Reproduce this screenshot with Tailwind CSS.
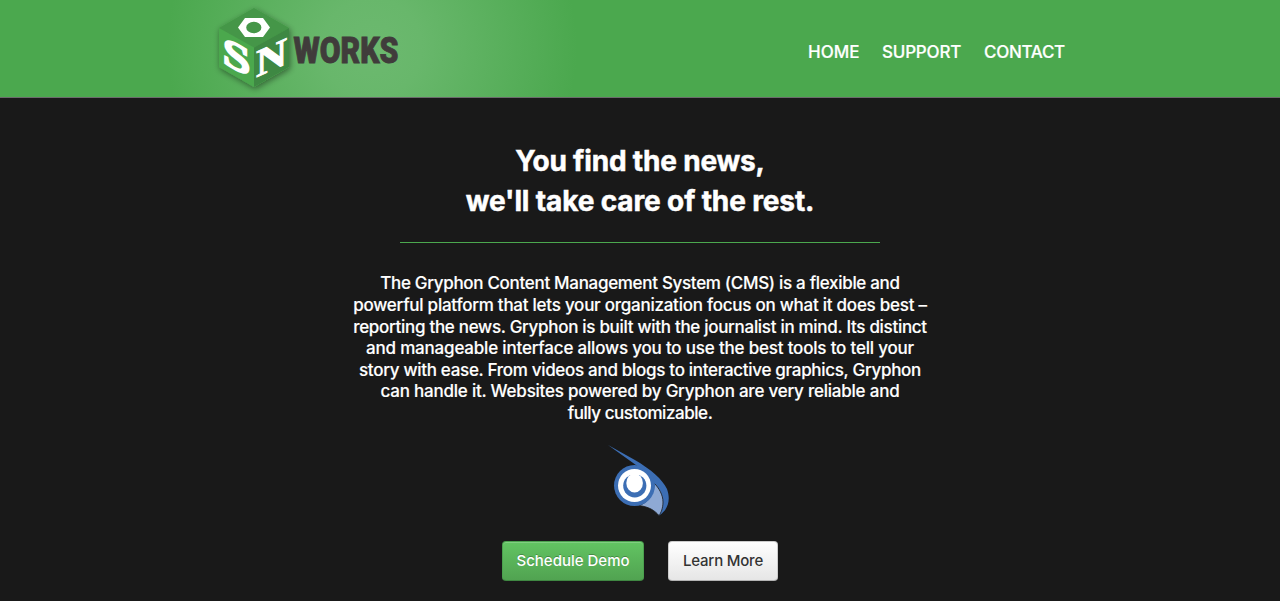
<!DOCTYPE html>
<html lang="en">
<head>
<meta charset="utf-8">
<title>SNworks</title>
<script src="https://cdn.jsdelivr.net/npm/@tailwindcss/browser@4"></script>
</head>
<body class="h-[601px] overflow-hidden bg-[#191919] font-['Inter',sans-serif] text-white">
<header class="h-[98px] border-b border-[#6b6b6b] bg-[#4ba84e] bg-[radial-gradient(circle_at_372px_48px,#6cb96f_0px,#68b76b_50px,#4ba84e_205px)]">
  <div class="mx-auto flex h-full w-[850px] items-start justify-between">
    <svg class="block h-[97px] w-[190px] overflow-visible" viewBox="215 0 190 97" role="img" aria-label="SNworks">
      <defs><filter id="sh" x="-20%" y="-20%" width="140%" height="140%"><feDropShadow dx="1" dy="2" stdDeviation="3" flood-color="#000" flood-opacity=".45"/></filter></defs>
      <g filter="url(#sh)">
        <path d="M254 8L289 28V67L254 87L219 67V28Z" fill="#4ba84e"/>
      </g>
      <path d="M254 8L289 28L254 47.5L219 28Z" fill="#459648"/>
      <path d="M289 28V67L254 87V47.5Z" fill="#3e8843"/>
      <path fill-rule="evenodd" fill="#fff" d="M238 27.5L245 18H263L270 27.5L263 37H245ZM246.2 27.5a7.6 5.8 0 1 0 15.2 0a7.6 5.8 0 1 0 -15.2 0Z"/>
      <text transform="matrix(1 .5 0 1 222.500 63)" font-family="Liberation Serif" font-weight="700" font-size="40" textLength="28" lengthAdjust="spacingAndGlyphs" fill="#fff" stroke="#fff" stroke-width="1.6">S</text>
      <text transform="matrix(1 -.45 0 1 256 77.500)" font-family="Liberation Serif" font-weight="700" font-size="39" textLength="31" lengthAdjust="spacingAndGlyphs" fill="#fff" stroke="#fff" stroke-width=".9">N</text>
      <text x="293.500" y="62.500" font-family="Roboto" font-weight="900" font-size="36.500" textLength="105" lengthAdjust="spacingAndGlyphs" fill="#403c3b" stroke="#403c3b" stroke-width=".9">WORKS</text>
    </svg>
    <nav class="flex gap-[22px] pt-[38px] text-[17px] leading-7 font-medium [-webkit-text-stroke:0.2px_white]">
      <a class="-ml-px w-[52px] tracking-[0.05px]">HOME</a>
      <a class="w-[80px] tracking-[-0.2px]">SUPPORT</a>
      <a class="w-[81px] tracking-[-0.3px]">CONTACT</a>
    </nav>
  </div>
</header>
<main class="flex flex-col items-center pt-[43px]">
  <h1 class="text-center text-[28px] leading-10 font-bold whitespace-nowrap [-webkit-text-stroke:0.5px_white]"><span class="block tracking-[-0.19px]">You find the news,</span><span class="block tracking-[-0.13px]">we'll take care of the rest.</span></h1>
  <hr class="mt-[21px] w-[480px] border-t border-[#4ba84e]">
  <p class="mt-[30.4px] text-center text-[17px] leading-[21.6px] font-medium whitespace-nowrap [-webkit-text-stroke:0.15px_white]">
    <span class="block tracking-[-0.31px]">The Gryphon Content Management System (CMS) is a flexible and</span>
    <span class="block tracking-[-0.25px]">powerful platform that lets your organization focus on what it does best –</span>
    <span class="block tracking-[-0.301px]">reporting the news. Gryphon is built with the journalist in mind. Its distinct</span>
    <span class="block tracking-[-0.192px]">and manageable interface allows you to use the best tools to tell your</span>
    <span class="block tracking-[-0.3px]">story with ease. From videos and blogs to interactive graphics, Gryphon</span>
    <span class="block tracking-[-0.223px]">can handle it. Websites powered by Gryphon are very reliable and</span>
    <span class="block tracking-[-0.45px]">fully customizable.</span>
  </p>
  <svg class="mt-[10.4px] block h-[90px] w-[80px]" viewBox="0 0 80 90" aria-hidden="true">
    <path fill="#3c6eb4" d="M8 10L34 24.5C52 35 62 44 67 54C71 65 68 75 59 80.5L53 49L38 31.500Z"/>
    <path fill="#8ea9d4" stroke="#191919" stroke-width=".8" d="M54 48C59 53 63 60 63 67C63 73 61 78 59 80.5C55 76 50 72 39 70.500C47 68 54 60 54 48Z"/>
    <circle cx="34.500" cy="50.500" r="20.500" fill="#3c6eb4"/>
    <circle cx="34.500" cy="50.500" r="16.500" fill="#fff"/>
    <circle cx="34.800" cy="50.800" r="11.600" fill="#3c6eb4"/>
    <path fill="#fff" d="M28 40L30 38H40L42 40Z"/>
    <ellipse cx="34.600" cy="48" rx="8.300" ry="9.500" fill="#fff"/>
  </svg>
  <div class="mt-4 flex gap-6 text-[15px] font-medium">
    <button class="h-10 w-[142px] rounded-[4px] border border-[#4ba04e] border-b-[#3f8742] bg-linear-to-b from-[#62c462] to-[#51a351] whitespace-nowrap shadow-[inset_0_1px_0_rgba(255,255,255,0.2)] text-shadow-[0_-1px_0_rgba(0,0,0,0.25)]">Schedule Demo</button>
    <button class="h-10 w-[110px] rounded-[4px] border border-[#cccccc] border-b-[#b3b3b3] bg-linear-to-b from-white to-[#e6e6e6] tracking-[-0.205px] whitespace-nowrap text-[#333]">Learn More</button>
  </div>
</main>
</body>
</html>
